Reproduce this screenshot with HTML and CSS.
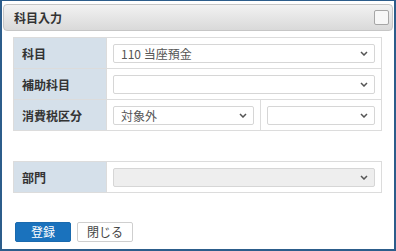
FILE: index.html
```html
<!DOCTYPE html>
<html lang="ja">
<head>
<meta charset="utf-8">
<link rel="stylesheet" href="styles.css">
</head>
<body>
<div class="dialog">
  <div class="header">
    <span class="title">科目入力</span>
    <span class="box"></span>
  </div>
  <div class="content">
    <table class="form">
      <tr>
        <th>科目</th>
        <td colspan="2"><div class="sel"><span>110 当座預金</span><svg class="chev" width="8" height="5" viewBox="0 0 8 5"><path d="M1 1 L4 4 L7 1" fill="none" stroke="#555" stroke-width="1.5"/></svg></div></td>
      </tr>
      <tr>
        <th>補助科目</th>
        <td colspan="2"><div class="sel"><span></span><svg class="chev" width="8" height="5" viewBox="0 0 8 5"><path d="M1 1 L4 4 L7 1" fill="none" stroke="#555" stroke-width="1.5"/></svg></div></td>
      </tr>
      <tr>
        <th>消費税区分</th>
        <td class="half"><div class="sel"><span>対象外</span><svg class="chev" width="8" height="5" viewBox="0 0 8 5"><path d="M1 1 L4 4 L7 1" fill="none" stroke="#555" stroke-width="1.5"/></svg></div></td>
        <td><div class="sel"><span></span><svg class="chev" width="8" height="5" viewBox="0 0 8 5"><path d="M1 1 L4 4 L7 1" fill="none" stroke="#555" stroke-width="1.5"/></svg></div></td>
      </tr>
    </table>
    <table class="form second">
      <tr>
        <th>部門</th>
        <td><div class="sel disabled"><span></span><svg class="chev" width="8" height="5" viewBox="0 0 8 5"><path d="M1 1 L4 4 L7 1" fill="none" stroke="#555" stroke-width="1.5"/></svg></div></td>
      </tr>
    </table>
    <div class="buttons">
      <button class="btn primary">登録</button>
      <button class="btn">閉じる</button>
    </div>
  </div>
</div>
</body>
</html>
```
FILE: styles.css
```css
html, body {
  margin: 0;
  padding: 0;
  background: #fff;
}
body {
  font-family: "Noto Sans CJK JP", "Noto Sans", sans-serif;
  font-size: 12px;
  color: #333;
}
.dialog {
  width: 396px;
  height: 251px;
  box-sizing: border-box;
  border: 2px solid #2c5d8b;
  border-top-width: 1px;
  padding: 3px 1px 0 1px;
  background: #fff;
}
.header {
  height: 27px;
  box-sizing: border-box;
  border: 1px solid #c6c6c6;
  border-radius: 4px;
  background: linear-gradient(#f2f2f2, #d9d9d9);
  display: flex;
  align-items: center;
  justify-content: space-between;
  padding: 0 3px 0 10px;
}
.title {
  font-weight: bold;
  font-size: 12px;
  color: #333;
}
.box {
  width: 15px;
  height: 15px;
  box-sizing: border-box;
  border: 1px solid #a6a6a6;
  border-radius: 2px;
  background: #f7f7f7;
}
.content {
  padding: 6px 10px 0 10px;
}
.form {
  width: 369px;
  border-collapse: collapse;
  border: 1px solid #dcdcdc;
}
.form tr {
  height: 31px;
}
.form th, .form td {
  border: 1px solid #dcdcdc;
  padding: 0 6px;
}
.form th {
  width: 78px;
  background: #d5e0ea;
  text-align: left;
  font-weight: bold;
  font-size: 12px;
  padding-left: 8px;
  color: #333;
}
.form td.half {
  width: 141px;
}
.second {
  margin-top: 30px;
}
.sel {
  height: 19px;
  box-sizing: border-box;
  border: 1px solid #d6d6d6;
  border-radius: 2px;
  background: #fff;
  display: flex;
  align-items: center;
  justify-content: space-between;
  padding: 0 6px 0 7px;
  color: #555;
  font-size: 12px;
}
.sel.disabled {
  background: #eeeeee;
}
.chev {
  flex: none;
}
.buttons {
  display: flex;
  gap: 6px;
  margin-top: 29px;
  padding-left: 2px;
}
.btn {
  width: 56px;
  height: 20px;
  box-sizing: border-box;
  border: 1px solid #cfcfcf;
  border-radius: 2px;
  background: #fff;
  color: #444;
  font-family: "Noto Sans CJK JP", "Noto Sans", sans-serif;
  font-size: 12px;
  padding: 0;
  line-height: 18px;
}
.btn.primary {
  background: #1a72bd;
  border-color: #1a6aae;
  color: #fff;
}
```
